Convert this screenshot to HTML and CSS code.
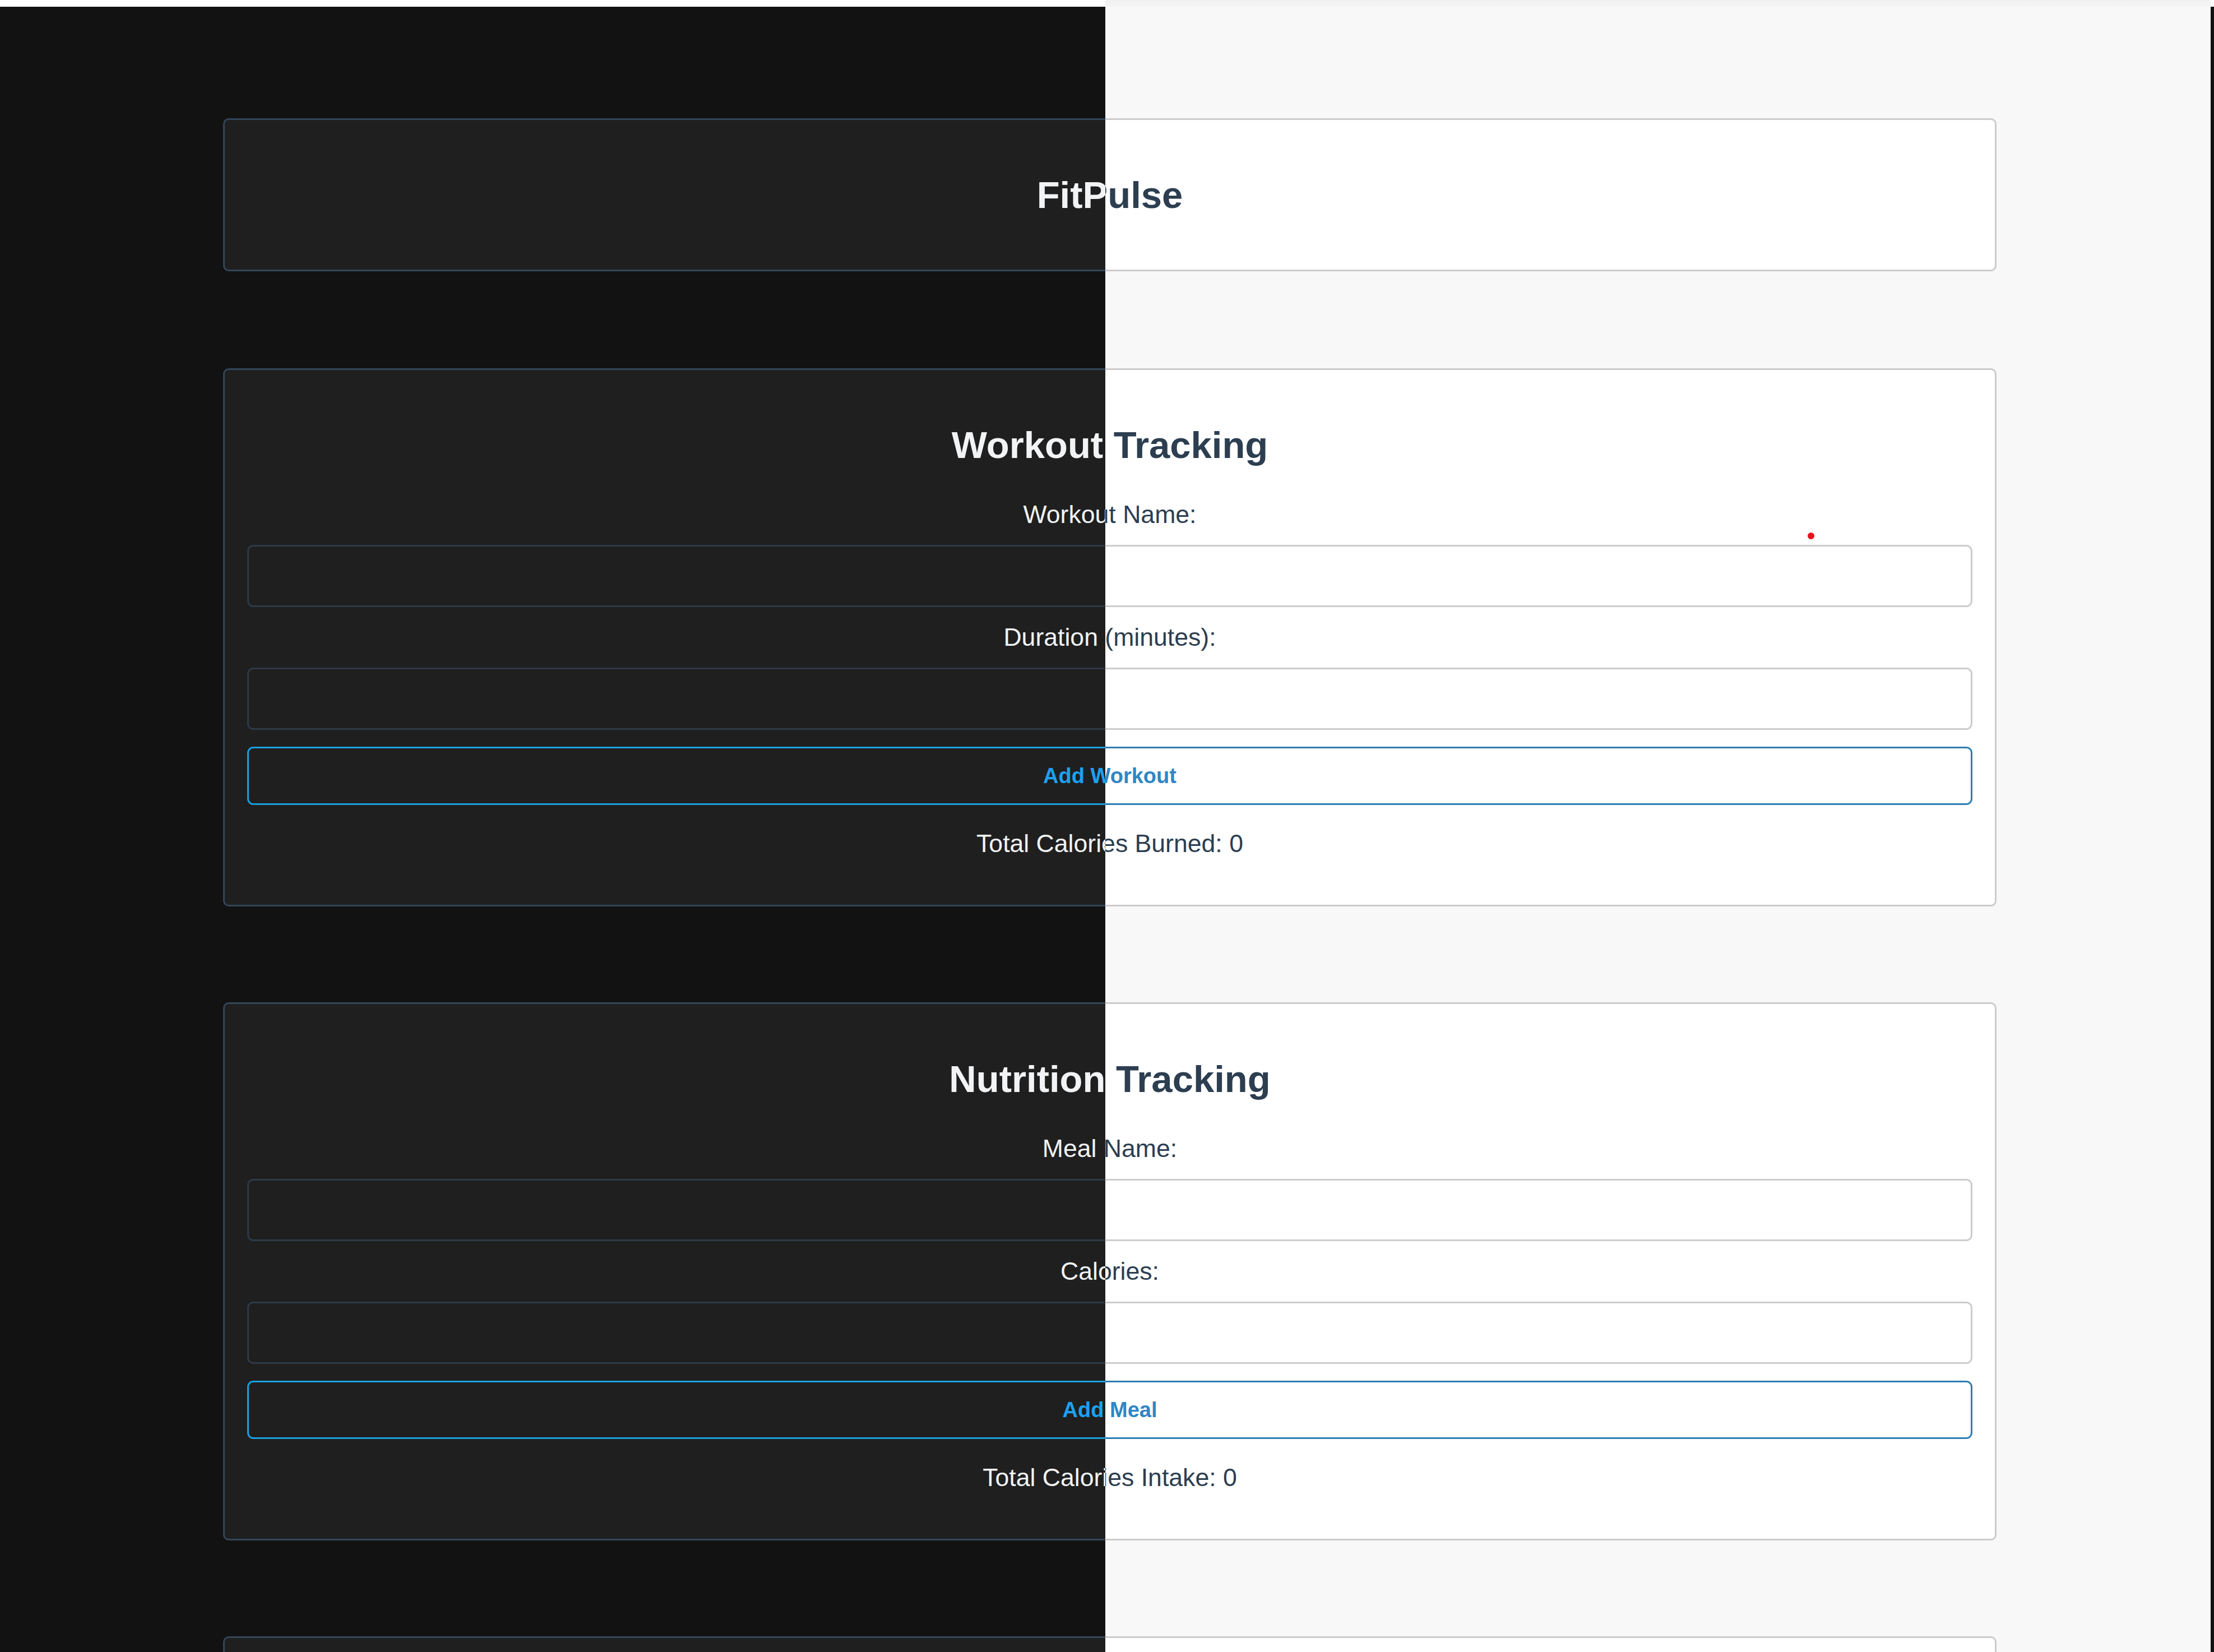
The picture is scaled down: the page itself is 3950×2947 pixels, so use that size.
FILE: index.html
```html
<!DOCTYPE html>
<html lang="en">
<head>
<meta charset="utf-8">
<title>FitPulse</title>
<link rel="stylesheet" href="styles.css">
</head>
<body>
<div class="frame">
  <div class="strip">
    <div class="strip-dark"></div>
    <div class="strip-light"></div>
    <div class="strip-edge"></div>
  </div>
  <div class="split">
    <div class="pane pane-dark">
      <div class="page theme-dark">
        <header class="card header-card"><h1 class="title">FitPulse</h1></header>
        <section class="card">
          <h2 class="title">Workout Tracking</h2>
          <label class="field-label first">Workout Name:</label>
          <input class="field" type="text">
          <label class="field-label">Duration (minutes):</label>
          <input class="field" type="number">
          <button class="action" type="button">Add Workout</button>
          <p class="total">Total Calories Burned: 0</p>
        </section>
        <section class="card">
          <h2 class="title">Nutrition Tracking</h2>
          <label class="field-label first">Meal Name:</label>
          <input class="field" type="text">
          <label class="field-label">Calories:</label>
          <input class="field" type="number">
          <button class="action" type="button">Add Meal</button>
          <p class="total">Total Calories Intake: 0</p>
        </section>
        <section class="card empty-card"></section>
      </div>
    </div>
    <div class="pane pane-light">
      <div class="page theme-light">
        <header class="card header-card"><h1 class="title">FitPulse</h1></header>
        <section class="card">
          <h2 class="title">Workout Tracking</h2>
          <label class="field-label first">Workout Name:</label>
          <input class="field" type="text">
          <label class="field-label">Duration (minutes):</label>
          <input class="field" type="number">
          <button class="action" type="button">Add Workout</button>
          <p class="total">Total Calories Burned: 0</p>
        </section>
        <section class="card">
          <h2 class="title">Nutrition Tracking</h2>
          <label class="field-label first">Meal Name:</label>
          <input class="field" type="text">
          <label class="field-label">Calories:</label>
          <input class="field" type="number">
          <button class="action" type="button">Add Meal</button>
          <p class="total">Total Calories Intake: 0</p>
        </section>
        <section class="card empty-card"></section>
      </div>
    </div>
    <div class="edge"></div>
  </div>
  <span class="marker"></span>
</div>
</body>
</html>
```

FILE: styles.css
```css
* { box-sizing: border-box; }
html, body { margin: 0; padding: 0; }
body {
  width: 3950px;
  height: 2947px;
  overflow: hidden;
  background: #ffffff;
  font-family: "Liberation Sans", Arial, sans-serif;
}
.frame {
  position: relative;
  width: 3950px;
  height: 2947px;
  display: flex;
  flex-direction: column;
}
.strip { display: flex; height: 12px; flex: none; }
.strip-dark { width: 1972px; background: #ffffff; }
.strip-light { width: 1972px; background: linear-gradient(#f1f1f1, #f5f5f5); }
.strip-edge { flex: 1; background: #ffffff; }

.split { display: flex; flex: 1; min-height: 0; }
.pane { width: 1972px; flex: none; overflow: hidden; }
.edge { flex: 1; background: #121212; }

.page {
  width: 3944px;
  height: 100%;
  padding-top: 199px;
  font-size: 44.6px;
  line-height: 51px;
}
.pane-light .page { margin-left: -1972px; }

.card {
  width: 3164px;
  margin: 0 0 171px 398px;
  border: 3px solid;
  border-radius: 10px;
  padding: 95px 40px 84px;
  text-align: center;
}
.header-card { padding: 95px 40px; margin-bottom: 173px; }
.empty-card { height: 400px; }

.title {
  margin: 0;
  font-size: 67px;
  line-height: 77px;
  font-weight: bold;
}
.field-label { display: block; margin-top: 28px; }
.field-label.first { margin-top: 60px; }
.field {
  display: block;
  width: 100%;
  height: 111px;
  margin-top: 29px;
  border: 3px solid;
  border-radius: 11px;
  font: inherit;
  outline: none;
}
.action {
  display: block;
  width: 100%;
  height: 104px;
  margin-top: 30px;
  border: 3px solid;
  border-radius: 11px;
  background: transparent;
  font-family: "Liberation Sans", Arial, sans-serif;
  font-size: 38px;
  font-weight: bold;
  cursor: pointer;
}
.total { margin: 43px 0 0; }

/* dark theme */
.theme-dark { background: #121212; color: #f1f3f5; }
.theme-dark .card { background: #1f1f1f; border-color: #33465a; }
.theme-dark .field { background: #1f1f1f; border-color: #2d3a48; color: #f1f3f5; }
.theme-dark .action { border-color: #1b9fe0; color: #1da1f2; }

/* light theme */
.theme-light { background: #f8f8f8; color: #2c3e50; }
.theme-light .card { background: #ffffff; border-color: #cccccc; }
.theme-light .field { background: #ffffff; border-color: #cccccc; color: #2c3e50; }
.theme-light .action { border-color: #2e7db3; color: #2f86c3; }

.marker {
  position: absolute;
  left: 3225px;
  top: 950px;
  width: 12px;
  height: 12px;
  border-radius: 50%;
  background: #e8141c;
}
```
